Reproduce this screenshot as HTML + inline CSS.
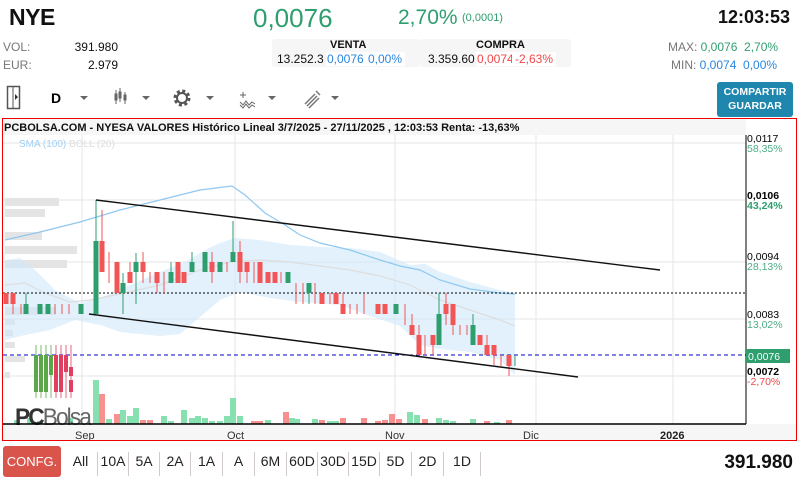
<!DOCTYPE html>
<html><head><meta charset="utf-8"><style>
*{margin:0;padding:0;box-sizing:border-box}
body{width:808px;height:483px;background:#fff;font-family:"Liberation Sans",sans-serif;position:relative;overflow:hidden;color:#111}
.a{position:absolute;white-space:nowrap}
.g{color:#2e9e6e}.b{color:#2a86e0}.r{color:#f04848}.gr{color:#777}
.tb{position:absolute;top:452px;font-size:14px;color:#222;text-align:center;height:24px;line-height:18px;border-right:1px solid #d0c8cc}
</style></head><body>
<div class="a" style="left:9px;top:4px;font-size:23px;font-weight:bold;letter-spacing:-0.5px">NYE</div>
<div class="a g" style="left:253px;top:3px;font-size:26px">0,0076</div>
<div class="a g" style="left:398px;top:6px;font-size:21px">2,70%</div>
<div class="a g" style="left:462px;top:12px;font-size:11px">(0,0001)</div>
<div class="a" style="right:18px;top:7px;font-size:18px;font-weight:bold">12:03:53</div>
<div class="a gr" style="left:3px;top:40px;font-size:12px">VOL:</div>
<div class="a gr" style="left:3px;top:58px;font-size:12px">EUR:</div>
<div class="a" style="left:70px;width:48px;text-align:right;top:40px;font-size:12px">391.980</div>
<div class="a" style="left:70px;width:48px;text-align:right;top:58px;font-size:12px">2.979</div>
<div class="a" style="left:272px;top:39px;width:149px;height:28px;background:#f6f6f6;border-radius:3px"></div>
<div class="a" style="left:421px;top:39px;width:150px;height:28px;background:#f6f6f6;border-radius:3px"></div>
<div class="a" style="left:330px;top:39px;font-size:11px;font-weight:bold">VENTA</div>
<div class="a" style="left:476px;top:39px;font-size:11px;font-weight:bold">COMPRA</div>
<div class="a" style="left:277px;top:52px;font-size:12px">13.252.3</div>
<div class="a b" style="left:326px;top:52px;font-size:12px;background:#fff;padding:0 1px">0,0076</div>
<div class="a b" style="left:365px;top:52px;font-size:12px;background:#fff;padding:0 3px">0,00%</div>
<div class="a" style="left:428px;top:52px;font-size:12px">3.359.60</div>
<div class="a r" style="left:476px;top:52px;font-size:12px;background:#fff;padding:0 1px">0,0074</div>
<div class="a r" style="left:512px;top:52px;font-size:12px;background:#fff;padding:0 3px">-2,63%</div>
<div class="a gr" style="left:668px;top:40px;font-size:12px">MAX: <span class="g">0,0076</span>&nbsp; <span class="g">2,70%</span></div>
<div class="a gr" style="left:671px;top:58px;font-size:12px">MIN: <span class="b">0,0074</span>&nbsp; <span class="b">0,00%</span></div>
<svg class="a" style="left:0;top:80px" width="360" height="36">
<rect x="7.5" y="6.5" width="12" height="22" fill="none" stroke="#555" stroke-width="1.5"/><line x1="13" y1="7" x2="13" y2="28" stroke="#555"/><path d="M15 14 l3 3 -3 3z" fill="#333"/>
<text x="51" y="23" font-family="Liberation Sans" font-weight="bold" font-size="14">D</text>
<path d="M80 16h8l-4 4z M142 16h8l-4 4z M206 16h8l-4 4z M268 16h8l-4 4z M331 16h8l-4 4z" fill="#666"/>
<g stroke="#666" fill="#666"><line x1="116" y1="10" x2="116" y2="24"/><rect x="115" y="14" width="2" height="6"/><line x1="120" y1="8" x2="120" y2="22"/><rect x="119" y="12" width="2" height="6"/><line x1="125" y1="12" x2="125" y2="24"/><rect x="124" y="15" width="2" height="5"/></g>
<g transform="translate(182 18)"><circle r="7" fill="none" stroke="#555" stroke-width="3" stroke-dasharray="3 2.5"/><circle r="5" fill="none" stroke="#555" stroke-width="2"/></g>
<path d="M240 22 l3 3 3-4 3 4 3-3 3 2 M240 25 l3 3 3-4 3 4 3-3 3 2 M243 12v6 M240 15h6" stroke="#666" fill="none" stroke-width="1"/>
<path d="M305 24 l10-10 M307 26 l10-10 M309 28 l10-10 M316 11l4 4" stroke="#777" fill="none" stroke-width="1.5"/>
</svg>
<div class="a" style="left:717px;top:82px;width:76px;height:35px;background:#1f86ae;border-radius:3px;color:#fff;font-size:10.5px;font-weight:bold;text-align:center;line-height:14px;padding-top:3px">COMPARTIR<br>GUARDAR</div>
<div class="a" style="left:2px;top:118px;width:795px;height:323px;border:1px solid #e00"></div>
<svg class="a" style="left:3px;top:119px" width="793" height="321" viewBox="3 119 793 321">
<rect x="3" y="119" width="743" height="16" fill="#f6f6f6"/>
<rect x="3" y="424" width="793" height="16" fill="#f6f6f6"/>
<g stroke="#e6e6e6" stroke-width="1"><line x1="3" y1="143" x2="746" y2="143"/><line x1="3" y1="200" x2="746" y2="200"/><line x1="3" y1="262" x2="746" y2="262"/><line x1="3" y1="319" x2="746" y2="319"/><line x1="3" y1="376" x2="746" y2="376"/>
<line x1="82" y1="135" x2="82" y2="424"/><line x1="235" y1="135" x2="235" y2="424"/><line x1="395" y1="135" x2="395" y2="424"/><line x1="536" y1="135" x2="536" y2="424"/><line x1="673" y1="135" x2="673" y2="424"/></g>
<g fill="#e4e4e4"><rect x="5" y="198" width="54" height="8"/><rect x="5" y="209" width="40" height="8"/><rect x="5" y="232" width="37" height="8"/><rect x="5" y="246" width="72" height="8"/><rect x="5" y="260" width="62" height="8"/><rect x="5" y="307" width="51" height="8"/><rect x="5" y="319" width="10" height="6"/><rect x="5" y="330" width="8" height="6"/><rect x="5" y="342" width="10" height="6"/><rect x="5" y="356" width="20" height="6"/><rect x="5" y="372" width="5" height="6"/></g>
<polygon fill="#cfe8fa" fill-opacity="0.6" points="5,260 20,258 35,270 55,290 80,303 100,298 130,285 160,272 185,262 205,250 220,243 235,238 260,240 290,245 320,247 350,248 380,252 410,265 425,264 440,272 470,282 500,290 515,293 515,375 500,360 470,352 440,349 420,345 400,326 370,316 340,305 300,302 270,298 240,292 220,300 200,317 180,334 160,336 120,332 100,325 75,320 50,330 25,335 5,340"/>
<polyline fill="none" stroke="#ddd" stroke-width="1.2" points="5,285 25,283 45,293 70,302 90,300 120,294 160,285 200,270 230,262 260,260 290,262 320,266 350,270 380,276 410,285 440,300 470,310 500,320 515,326"/>
<polyline fill="none" stroke="#8fc8f0" stroke-width="1.2" points="5,240 40,232 80,222 120,210 160,200 200,190 232,186 245,195 265,213 285,225 300,235 320,243 350,250 380,260 400,266 420,270 440,280 470,289 500,293 515,294"/>
<line x1="3" y1="293" x2="746" y2="293" stroke="#000" stroke-dasharray="2 2"/>
<line x1="3" y1="355" x2="746" y2="355" stroke="#00c" stroke-dasharray="4 3"/>
<g id="cd"></g>
<line x1="96" y1="200" x2="660" y2="270" stroke="#111" stroke-width="1.4"/>
<line x1="89" y1="314" x2="578" y2="377" stroke="#111" stroke-width="1.4"/>
<g id="lg"></g>
<text x="15" y="425" font-family="Liberation Sans" font-size="24" fill="#333" letter-spacing="-2" textLength="75" lengthAdjust="spacingAndGlyphs"><tspan font-weight="bold">PC</tspan><tspan fill="#666">Bolsa</tspan></text>
<line x1="746" y1="135" x2="746" y2="424" stroke="#000"/>
<line x1="3" y1="424" x2="746" y2="424" stroke="#000" stroke-width="1.5"/>
<text x="19" y="147" font-family="Liberation Sans" font-size="10" fill="#9fd0f4">SMA (100) <tspan fill="#ddd">BOLL (20)</tspan></text>
<g font-family="Liberation Sans" font-size="10.5">
<text x="747" y="142">0,0117</text><text x="747" y="152" fill="#4cae84">58,35%</text>
<text x="747" y="199" font-weight="bold">0,0106</text><text x="747" y="209" fill="#2e9e6e" font-weight="bold">43,24%</text>
<text x="747" y="260">0,0094</text><text x="747" y="270" fill="#4cae84">28,13%</text>
<text x="747" y="318">0,0083</text><text x="747" y="328" fill="#4cae84">13,02%</text>
<rect x="746" y="349" width="44" height="14" fill="#2e9e6e"/><text x="748" y="360" fill="#fff">0,0076</text>
<text x="747" y="375" font-weight="bold">0,0072</text><text x="747" y="385" fill="#f04848">-2,70%</text>
<text x="75" y="439" font-size="11" fill="#333">Sep</text><text x="227" y="439" font-size="11" fill="#333">Oct</text><text x="385" y="439" font-size="11" fill="#333">Nov</text><text x="523" y="439" font-size="11" fill="#333">Dic</text><text x="660" y="439" font-size="11" fill="#222" font-weight="bold">2026</text>
</g>
<text x="4" y="131" font-family="Liberation Sans" font-size="11" font-weight="bold" fill="#111">PCBOLSA.COM - NYESA VALORES Histórico Lineal 3/7/2025 - 27/11/2025 , 12:03:53 Renta: -13,63%</text>
</svg>
<div class="a" style="left:3px;top:446px;width:58px;height:31px;background:#d9544a;border-radius:3px;color:#fff;font-size:13px;text-align:center;line-height:31px">CONFG.</div>
<div class="tb" style="left:64px;width:34px">All</div>
<div class="tb" style="left:98px;width:31px">10A</div>
<div class="tb" style="left:129px;width:31px">5A</div>
<div class="tb" style="left:160px;width:31px">2A</div>
<div class="tb" style="left:191px;width:32px">1A</div>
<div class="tb" style="left:223px;width:32px">A</div>
<div class="tb" style="left:255px;width:32px">6M</div>
<div class="tb" style="left:287px;width:31px">60D</div>
<div class="tb" style="left:318px;width:31px">30D</div>
<div class="tb" style="left:349px;width:31px">15D</div>
<div class="tb" style="left:380px;width:32px">5D</div>
<div class="tb" style="left:412px;width:32px">2D</div>
<div class="tb" style="left:444px;width:37px">1D</div>
<div class="a" style="right:15px;top:452px;font-size:19px;font-weight:bold">391.980</div>
<script>
var C=[[6,293,304,293,304],[13,293,304,293,314],[21,304,305,304,314],[26,314,304,293,314],[40,314,304,304,314],[48,314,304,304,314],[55,309,310,304,314],[62,309,310,304,314],[69,309,310,304,314],[81,314,304,304,314],[96,314,241,200,314],[102,241,272,210,272],[109,272,273,252,283],[117,262,293,262,293],[123,293,283,273,314],[130,272,283,262,283],[136,272,262,253,304],[143,262,272,252,283],[150,277,278,272,283],[157,272,283,272,293],[164,280,281,272,293],[171,283,272,262,283],[178,262,283,262,283],[184,272,283,272,283],[192,272,262,252,272],[205,272,252,252,272],[212,262,272,252,283],[220,272,262,262,272],[227,262,263,262,272],[233,262,252,221,262],[240,252,272,241,283],[247,262,272,262,283],[254,270,271,262,283],[260,262,283,262,283],[268,272,283,272,283],[275,272,283,272,283],[281,272,273,272,283],[288,283,272,272,283],[296,290,291,283,304],[303,290,291,283,304],[309,293,283,283,304],[315,290,291,283,304],[322,293,304,293,304],[330,298,299,293,304],[336,293,304,293,304],[343,304,314,293,314],[350,308,309,304,314],[357,308,309,304,314],[364,308,309,293,314],[378,304,314,304,314],[385,304,314,304,314],[396,314,304,304,314],[405,312,313,304,325],[412,325,335,314,335],[419,335,355,325,355],[425,345,346,335,355],[433,335,345,335,355],[439,345,314,293,345],[446,304,314,293,325],[453,304,325,304,335],[460,315,316,325,335],[467,315,316,325,335],[473,345,325,314,345],[480,335,345,335,345],[487,345,355,335,355],[494,345,355,345,365],[501,360,361,355,366],[509,355,366,355,376],[515,366,365,355,366]];
var V=[[96,44,1],[102,30,0],[109,5,1],[117,10,0],[123,14,1],[130,8,1],[136,16,1],[143,4,0],[150,4,0],[164,8,1],[171,3,1],[184,14,1],[192,6,1],[198,8,1],[205,6,1],[212,3,1],[220,3,1],[227,8,1],[233,26,1],[240,8,1],[254,3,0],[260,3,0],[268,4,1],[286,12,0],[292,6,1],[297,5,1],[315,5,1],[322,4,0],[330,3,1],[336,3,1],[343,6,0],[364,6,0],[378,3,0],[385,4,0],[392,10,0],[399,5,0],[410,12,1],[417,9,1],[425,5,0],[439,6,1],[446,4,1],[453,3,1],[473,5,1],[487,3,0],[497,2,1],[509,4,0],[17,4,1],[30,6,1],[40,3,1],[70,6,1]];
var s='';
V.forEach(function(v){s+='<rect x="'+(v[0]-3)+'" y="'+(424-v[1])+'" width="6" height="'+v[1]+'" fill="'+(v[2]?'#86e0b0':'#f89090')+'"/>';});
C.forEach(function(c){var g=c[2]<=c[1];var col=g?'#2e9e6e':'#f25555';var t=Math.min(c[1],c[2]),h=Math.max(1,Math.abs(c[1]-c[2]));
s+='<line x1="'+c[0]+'" y1="'+c[3]+'" x2="'+c[0]+'" y2="'+c[4]+'" stroke="'+col+'"/>';
if(h>2)s+='<rect x="'+(c[0]-2.5)+'" y="'+t+'" width="5" height="'+h+'" fill="'+col+'"/>';});
document.getElementById('cd').innerHTML=s;
var l='';[[36,'#5aa84a',345,398,355,392],[41,'#5aa84a',345,398,355,392],[46,'#5aa84a',345,398,355,392],[51,'#5aa84a',345,398,355,375],[56,'#e04060',345,398,355,392],[61,'#e04060',345,398,355,392],[66,'#e04060',345,398,355,372],[71,'#e04060',345,398,380,392]].forEach(function(k){
l+='<line x1="'+k[0]+'" y1="'+k[2]+'" x2="'+k[0]+'" y2="'+k[3]+'" stroke="'+k[1]+'" stroke-width="0.8"/><rect x="'+(k[0]-2)+'" y="'+k[4]+'" width="4" height="'+(k[5]-k[4])+'" fill="'+k[1]+'"/>';});
l+='<rect x="69" y="367" width="4" height="9" fill="#e04060"/>';
document.getElementById('lg').innerHTML=l;
</script>
</body></html>
